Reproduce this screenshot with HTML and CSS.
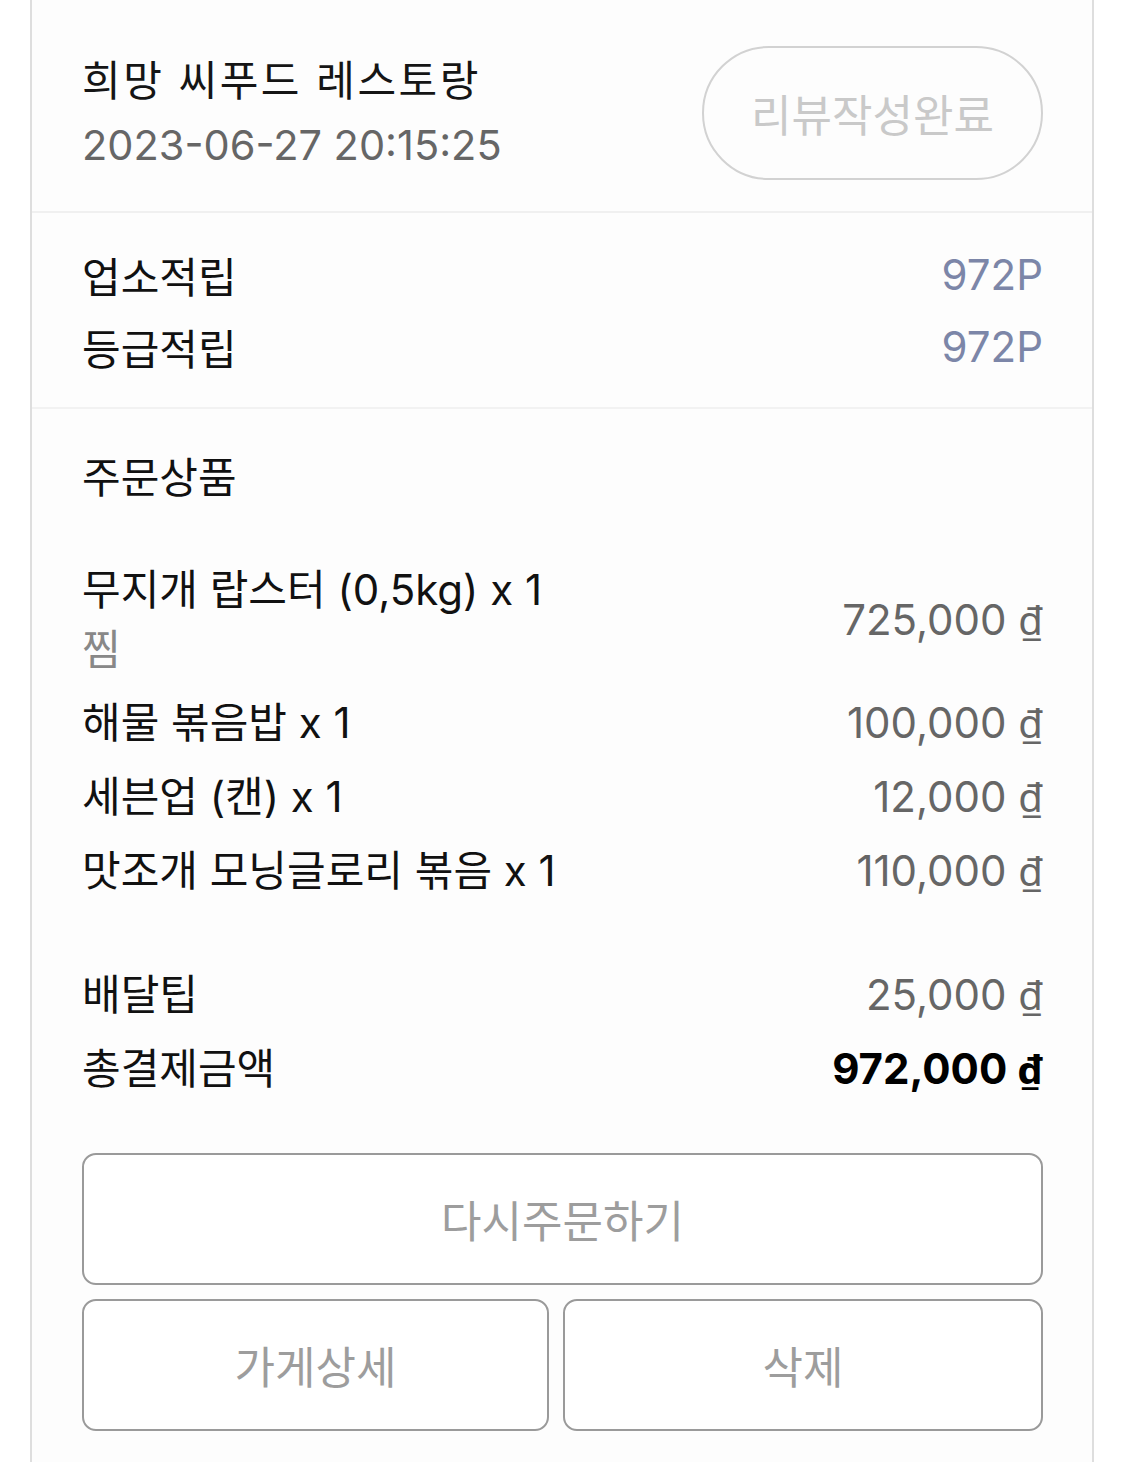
FILE: index.html
```html
<!DOCTYPE html>
<html lang="ko">
<head>
<meta charset="utf-8">
<title>주문내역</title>
<link rel="stylesheet" href="styles.css">
</head>
<body>
<div class="card">
  <section class="head">
    <div class="head-info">
      <div class="store">희망 씨푸드 레스토랑</div>
      <div class="date">2023-06-27 20:15:25</div>
    </div>
    <button class="review">리뷰작성완료</button>
  </section>
  <section class="points">
    <div class="row"><span class="label">업소적립</span><span class="pt">972P</span></div>
    <div class="row"><span class="label">등급적립</span><span class="pt">972P</span></div>
  </section>
  <section class="order">
    <div class="order-title">주문상품</div>
    <div class="items">
      <div class="item first">
        <div class="item-name">
          <div class="name-line">무지개 랍스터 (0,5kg) x 1</div>
          <div class="opt-line">찜</div>
        </div>
        <span class="price">725,000 <span class="cur">₫</span></span>
      </div>
      <div class="item"><span class="name">해물 볶음밥 x 1</span><span class="price">100,000 <span class="cur">₫</span></span></div>
      <div class="item"><span class="name">세븐업 (캔) x 1</span><span class="price">12,000 <span class="cur">₫</span></span></div>
      <div class="item"><span class="name">맛조개 모닝글로리 볶음 x 1</span><span class="price">110,000 <span class="cur">₫</span></span></div>
    </div>
    <div class="totals">
      <div class="item"><span class="name">배달팁</span><span class="price">25,000 <span class="cur">₫</span></span></div>
      <div class="item"><span class="name">총결제금액</span><span class="price total">972,000 <span class="cur">₫</span></span></div>
    </div>
    <div class="actions">
      <button class="btn wide">다시주문하기</button>
      <div class="btn-row">
        <button class="btn">가게상세</button>
        <button class="btn">삭제</button>
      </div>
    </div>
  </section>
</div>
</body>
</html>
```

FILE: styles.css
```css
* { box-sizing: border-box; }
html, body {
  margin: 0;
  padding: 0;
  background: #ffffff;
}
body {
  font-family: "Inter", "Noto Sans CJK KR", sans-serif;
  color: #111;
  height: 1462px;
  overflow: hidden;
}
.card {
  margin: 0 31px 0 30px;
  border-left: 2px solid #dedede;
  border-right: 2px solid #dedede;
  background: #fdfdfd;
  min-height: 1462px;
}
.head {
  display: flex;
  align-items: center;
  justify-content: space-between;
  padding: 46px 49px 31px 50px;
  border-bottom: 2px solid #f0f0f0;
}
.store {
  font-size: 42px;
  line-height: 64px;
  color: #151515;
  letter-spacing: 2.5px;
}
.date {
  font-size: 41.5px;
  line-height: 64px;
  color: #666;
}
.review {
  width: 341px;
  height: 134px;
  border: 2px solid #d2d2d2;
  border-radius: 67px;
  background: transparent;
  font-family: inherit;
  font-size: 44px;
  color: #c9c9c9;
  padding: 0;
}
.points {
  padding: 25px 49px 25px 50px;
  border-bottom: 2px solid #f2f2f2;
}
.row {
  display: flex;
  justify-content: space-between;
  align-items: center;
  height: 72px;
  font-size: 42px;
}
.pt {
  color: #7c86a8;
}
.order {
  padding: 37px 49px 0 50px;
}
.order-title {
  font-size: 42px;
  line-height: 64px;
  margin-bottom: 50px;
}
.item {
  display: flex;
  justify-content: space-between;
  align-items: center;
  font-size: 42px;
  line-height: 74px;
}
.item.first {
  line-height: 60px;
  margin-bottom: 6px;
}
.opt-line {
  color: #888;
}
.price {
  color: #666;
}
.cur {
  font-family: "Noto Sans", "Inter", sans-serif;
  font-weight: 400;
  font-size: 40px;
  line-height: 0;
}
.price.total {
  color: #000;
  font-weight: 700;
}
.price.total .cur {
  font-weight: 700;
}
.totals {
  margin-top: 50px;
}
.actions {
  margin-top: 47px;
  display: flex;
  flex-direction: column;
  gap: 14px;
}
.btn {
  height: 132px;
  border: 2px solid #9a9a9a;
  border-radius: 14px;
  background: #fff;
  font-family: inherit;
  font-size: 44px;
  color: #9d9d9d;
  padding: 0;
}
.btn.wide {
  width: 100%;
}
.btn-row {
  display: grid;
  grid-template-columns: 467px 1fr;
  gap: 14px;
}
```
